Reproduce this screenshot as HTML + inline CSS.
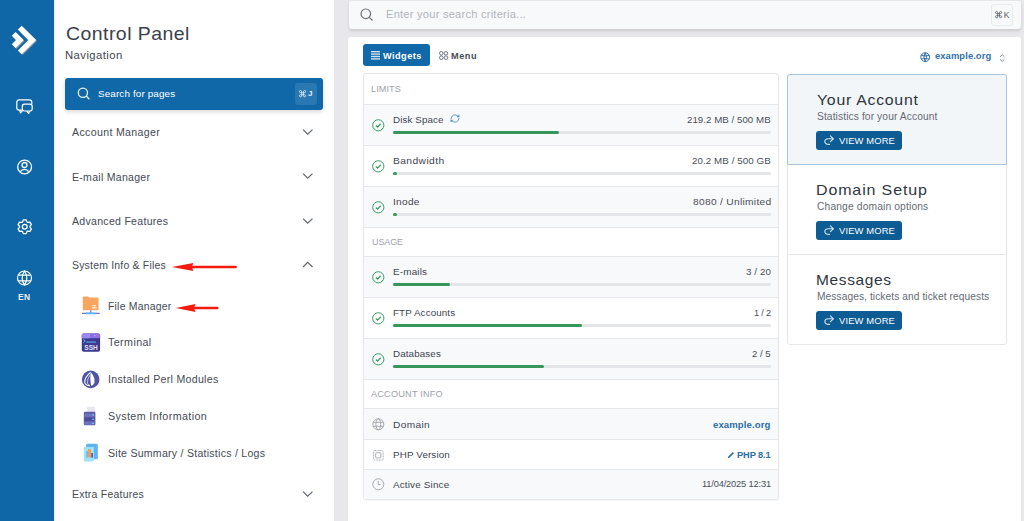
<!DOCTYPE html>
<html><head><meta charset="utf-8">
<style>
*{margin:0;padding:0;box-sizing:border-box}
html,body{width:1024px;height:521px;overflow:hidden;background:#e8e8ec;font-family:"Liberation Sans",sans-serif;color:#3b4250}
.a{position:absolute}
.t{position:absolute;white-space:nowrap;line-height:1}
svg{position:absolute;overflow:visible}
.nv{font-size:10px;color:#444a55;left:72px}
.sub{font-size:10px;color:#444a55;left:107px}
.row{position:absolute;left:364px;width:414px;border-top:1px solid #e7e8eb}
.g{background:#f8f9fb}
.lbl{font-size:10px;color:#3f4551}
.val{font-size:10px;color:#4a4f59;text-align:right}
.hdr{font-size:9px;color:#9ea2a9;left:371px}
.bar{position:absolute;left:393px;width:378px;height:3.5px;background:#e4e5e8;border-radius:2px}
.bar i{position:absolute;left:0;top:0;height:3.5px;background:#35985a;border-radius:2px}
.btn{position:absolute;left:816px;width:86px;height:19px;background:#0d5c94;border-radius:3px}
.btnt{font-size:9.5px;color:#fff;left:839px}
.h2{font-size:15px;letter-spacing:1.2px;color:#2f3540;left:817px}
.p{font-size:9.5px;letter-spacing:.42px;color:#666b74;left:817px}
</style></head><body>
<div class="a" style="left:0;top:0;width:54px;height:521px;background:#0f67a8"></div>
<div class="a" style="left:54px;top:0;width:280px;height:521px;background:#fff;border-left:1px solid #e6edf3"></div>

<!-- logo -->
<svg style="left:0;top:0" width="54" height="60">
  <polygon points="17.9,29.6 21.7,25.8 36.1,40 21.7,54.2 17.9,50.4 28.3,40" fill="#9b9aa0" transform="translate(.8,.9)"/>
  <polygon points="11.8,35.8 15.6,32 23.6,40 15.6,48 11.8,44.2 16,40" fill="#9b9aa0" transform="translate(.8,.9)"/>
  <polygon points="17.9,29.6 21.7,25.8 36.1,40 21.7,54.2 17.9,50.4 28.3,40" fill="#fff"/>
  <polygon points="11.8,35.8 15.6,32 23.6,40 15.6,48 11.8,44.2 16,40" fill="#fff"/>
</svg>
<!-- chat -->
<svg style="left:16px;top:99px" width="17" height="16" fill="none" stroke="#fff" stroke-width="1.2" stroke-linejoin="round">
  <path d="M6.5,11.2 H3.2 Q0.8,11.2 0.8,8.8 V3.2 Q0.8,0.8 3.2,0.8 H13.4 Q15.8,0.8 15.8,3.2 V5"/>
  <path d="M3.6,11.2 L4.6,14 L6.8,11.2"/>
  <path d="M8.5,5.2 H14 Q16.2,5.2 16.2,7.4 V9.8 Q16.2,12 14,12 H8.5 Q6.3,12 6.3,9.8 V7.4 Q6.3,5.2 8.5,5.2 Z" fill="#0f67a8"/>
  <path d="M10.8,12 L12.6,14.4 L13.6,12"/>
</svg>
<!-- user -->
<svg style="left:17px;top:160px" width="16" height="16" fill="none" stroke="#fff" stroke-width="1.3">
  <circle cx="7.6" cy="7.0" r="6.9"/>
  <circle cx="7.5" cy="5.0" r="2.5"/>
  <path d="M3.4,11.7 Q4.8,9.3 7.5,9.3 Q10.2,9.3 11.7,11.7"/>
</svg>
<!-- gear -->
<svg style="left:16px;top:217.8px" width="18" height="18" fill="none" stroke="#fff" stroke-width="1.3" stroke-linejoin="round">
  <path d="M6.59,3.91 L7.29,1.90 L10.21,1.90 L10.91,3.91 L11.87,4.46 L13.95,4.07 L15.41,6.59 L14.02,8.20 L14.02,9.30 L15.41,10.91 L13.95,13.43 L11.87,13.04 L10.91,13.59 L10.21,15.60 L7.29,15.60 L6.59,13.59 L5.63,13.04 L3.55,13.43 L2.09,10.91 L3.48,9.30 L3.48,8.20 L2.09,6.59 L3.55,4.07 L5.63,4.46 Z"/>
  <circle cx="8.75" cy="8.75" r="2.4"/>
</svg>
<!-- globe -->
<svg style="left:17px;top:270px" width="16" height="16" fill="none" stroke="#fff" stroke-width="1.2">
  <circle cx="7.5" cy="8" r="7"/>
  <path d="M7.5,1 Q2.8,8 7.5,15 Q12.2,8 7.5,1 Z"/>
  <path d="M1.3,5.2 H13.7 M1.3,10.8 H13.7"/>
</svg>
<div class="t" style="left:18px;top:293px;font-size:8.5px;letter-spacing:.3px;font-weight:bold;color:#e6eef5">EN</div>

<!-- nav content -->


<div class="a" style="left:65px;top:78px;width:258px;height:32px;background:#1068a8;border-radius:3px;box-shadow:0 2px 4px rgba(0,0,0,.15)"></div>
<svg style="left:77px;top:87px" width="14" height="14" fill="none" stroke="#eef4f9" stroke-width="1.3">
  <circle cx="5.9" cy="5.7" r="4.6"/><path d="M9.2,9 L12.4,12.3"/>
</svg>

<div class="a" style="left:295px;top:83px;width:22px;height:22px;background:#2a78b2;border-radius:3px"></div>
<svg style="left:298.6px;top:90.2px" width="9" height="9" fill="none" stroke="#dfe9f2" stroke-width="1.05"><path transform="scale(.82)" d="M3.2,3.2 V1.9 A1.3,1.3 0 1 0 1.9,3.2 H6.8 A1.3,1.3 0 1 0 5.5,1.9 V7 A1.3,1.3 0 1 0 6.8,5.7 H1.9 A1.3,1.3 0 1 0 3.2,7 Z"/></svg><div class="t" style="left:308px;top:89.8px;font-size:8px;font-weight:bold;color:#e9f0f6">J</div>

<!-- chevrons -->
<svg style="left:303px;top:129px" width="11" height="7" fill="none" stroke="#63686f" stroke-width="1.3"><path d="M0.1,0.6 L4.7,5.2 L9.5,0.6"/></svg>
<svg style="left:303px;top:173px" width="11" height="7" fill="none" stroke="#63686f" stroke-width="1.3"><path d="M0.1,0.6 L4.7,5.2 L9.5,0.6"/></svg>
<svg style="left:303px;top:218px" width="11" height="7" fill="none" stroke="#63686f" stroke-width="1.3"><path d="M0.1,0.6 L4.7,5.2 L9.5,0.6"/></svg>
<svg style="left:303.4px;top:261px" width="11" height="7" fill="none" stroke="#63686f" stroke-width="1.3"><path d="M0.1,6 L4.7,1.4 L9.5,6"/></svg>
<svg style="left:303px;top:491px" width="11" height="7" fill="none" stroke="#63686f" stroke-width="1.3"><path d="M0.1,0.6 L4.7,5.2 L9.5,0.6"/></svg>

<!-- red arrows -->
<svg style="left:170px;top:260.5px" width="70" height="12"><path d="M14,6 H65.6" stroke="#f41c10" stroke-width="2.6" stroke-linecap="round"/><polygon points="1.8,6 23.4,1.9 21.8,6 23.4,10.1" fill="#f41c10"/></svg>
<svg style="left:174px;top:302.2px" width="50" height="12"><path d="M12,6 H43.3" stroke="#f41c10" stroke-width="2.6" stroke-linecap="round"/><polygon points="1.8,6 21.6,2 20,6 21.6,10" fill="#f41c10"/></svg>
<!-- sub icons -->
<svg style="left:81px;top:296px" width="20" height="20">
  <path d="M1.8,0.5 H6.9 L8.1,1.6 H16.8 Q17.5,1.6 17.5,2.3 V14.3 H1.8 Z" fill="#f6a65e"/>
  <rect x="11.4" y="9" width="3.8" height="1.3" rx=".5" fill="#fde6cc"/><rect x="11" y="11" width="4.6" height="1.4" rx=".5" fill="#fde6cc"/>
  <rect x="9.2" y="14.3" width="1.1" height="2.4" fill="#5a5cc0"/>
  <rect x="0.9" y="16.8" width="17.8" height="1.1" fill="#5d5fc4"/>
  <rect x="4.8" y="16.4" width="9.9" height="1.9" rx=".6" fill="#56b8f2"/>
</svg>
<svg style="left:81px;top:333px" width="20" height="20">
  <rect x="0.8" y="0.6" width="18.3" height="18.2" rx="2" fill="#3c3a8e"/>
  <rect x="0.8" y="0.6" width="18.3" height="4.6" rx="1.8" fill="#8a6ee8"/>
  <rect x="0.8" y="0.6" width="8.4" height="4.6" rx="1.5" fill="#9c88f2"/>
  <circle cx="13.8" cy="2.7" r=".6" fill="#d8d0f5"/><circle cx="15.8" cy="2.7" r=".6" fill="#f07a5a"/>
  <path d="M2.3,6.5 L4.3,8 L2.3,9.8" stroke="#5fc8f5" stroke-width=".9" fill="none"/>
  <rect x="5.3" y="8.6" width="9.6" height=".9" fill="#5fc8f5"/>
  <text x="10" y="16.8" font-size="6.5" font-weight="bold" fill="#e4e4f8" text-anchor="middle" font-family="Liberation Sans">SSH</text>
</svg>
<svg style="left:78px;top:368px" width="24" height="24">
  <circle cx="12.7" cy="11.4" r="8.8" fill="#4f53a3"/>
  <path d="M12.6,4 Q17.6,9.6 16.3,15 Q15.3,17.8 13,17.7 Q11.8,11.5 12.6,4 Z" fill="#fff"/>
  <path d="M12.4,4.3 Q6,10 6.8,14.6 Q7.8,17.6 12,17.8" fill="none" stroke="#fff" stroke-width="1.1"/>
  <path d="M12.4,6.5 Q8.8,11 9.5,15.3 Q10.2,17 11.8,17.3" fill="none" stroke="#dfe3ff" stroke-width=".8"/>
</svg>
<svg style="left:78px;top:404px" width="24" height="24">
  <rect x="9.2" y="2.8" width="7.8" height="6.5" fill="#e6e8ef"/>
  <rect x="5.8" y="7.8" width="11.6" height="13.4" rx="1.2" fill="#5b5da9"/>
  <rect x="6.3" y="9.5" width="10.2" height="3.2" fill="#6f72bd"/>
  <rect x="6.3" y="13.8" width="10.2" height="3" fill="#4a4c9a"/>
  <rect x="6.3" y="17.8" width="10.2" height="3" fill="#6f72bd"/>
  <rect x="14.2" y="10.5" width="1.7" height="1.2" fill="#6fd0f0"/>
  <rect x="14.2" y="14.7" width="1.7" height="1.2" fill="#6fd0f0"/>
  <rect x="14.2" y="18.8" width="1.7" height="1.2" fill="#6fd0f0"/>
</svg>
<svg style="left:78px;top:441px" width="24" height="24">
  <rect x="8" y="2.8" width="11.8" height="15.4" rx="1.5" fill="#5fb3f2"/>
  <rect x="5.8" y="6" width="10.1" height="14.5" rx=".8" fill="#9fe3fa"/>
  <rect x="8.2" y="10" width="1.8" height="6.6" fill="#72b8ee"/>
  <rect x="13.1" y="12" width="1.9" height="4.6" fill="#5361b5"/>
  <rect x="9.9" y="8.1" width="3.2" height="8.5" rx="1" fill="#f2a04f"/>
</svg>

<!-- main -->
<div class="a" style="left:349px;top:1px;width:672px;height:27.5px;background:#f8f9fb;border-radius:3px;box-shadow:0 2px 3px rgba(0,0,0,.12)"></div>
<svg style="left:360px;top:8px" width="14" height="14" fill="none" stroke="#6d737c" stroke-width="1.2">
  <circle cx="5.8" cy="5.8" r="4.8"/><path d="M9.3,9.3 L12.5,12.5"/>
</svg>

<div class="a" style="left:990.5px;top:3.5px;width:22.5px;height:22px;border:1px solid #e8eaed;border-radius:3px;background:#f8f9fb"></div>
<svg style="left:994.6px;top:11px" width="9" height="9" fill="none" stroke="#60666f" stroke-width="1.05"><path transform="scale(.82)" d="M3.2,3.2 V1.9 A1.3,1.3 0 1 0 1.9,3.2 H6.8 A1.3,1.3 0 1 0 5.5,1.9 V7 A1.3,1.3 0 1 0 6.8,5.7 H1.9 A1.3,1.3 0 1 0 3.2,7 Z"/></svg><div class="t" style="left:1003.8px;top:10.8px;font-size:8.5px;color:#555b64">K</div>

<div class="a" style="left:348px;top:37px;width:673px;height:494px;background:#fff;border-radius:3px"></div>
<div class="a" style="left:363px;top:44px;width:67px;height:21.5px;background:#1169a9;border-radius:3px"></div>
<svg style="left:371px;top:51px" width="10" height="9"><g fill="#cfe0ee"><rect x="0" y="0" width="9" height="1.4"/><rect x="0" y="2.4" width="9" height="1.4"/><rect x="0" y="4.8" width="9" height="1.4"/><rect x="0" y="7.2" width="9" height="1.4"/></g></svg>
<div class="t" style="left:383px;top:51.5px;font-size:9.2px;letter-spacing:.45px;font-weight:bold;color:#fff">Widgets</div>
<svg style="left:438.5px;top:50.5px" width="11" height="10" fill="none" stroke="#5f6570" stroke-width=".9"><circle cx="2.3" cy="2.3" r="1.8"/><circle cx="6.9" cy="2.3" r="1.8"/><circle cx="2.3" cy="6.7" r="1.8"/><circle cx="6.9" cy="6.7" r="1.8"/></svg>
<div class="t" style="left:451px;top:51.5px;font-size:9.2px;letter-spacing:.5px;font-weight:bold;color:#474c56">Menu</div>

<svg style="left:920px;top:52px" width="11" height="11" fill="none" stroke="#3072ab" stroke-width="1"><circle cx="5.2" cy="5.2" r="4.4"/><path d="M5.2,0.8 Q2.4,5.2 5.2,9.6 Q8,5.2 5.2,0.8 Z"/><path d="M1.2,3.4 Q5.2,4.6 9.2,3.4 M1.2,7 Q5.2,5.8 9.2,7"/></svg>

<svg style="left:998.5px;top:53.5px" width="7" height="9" fill="none" stroke="#7d8fa0" stroke-width="1"><path d="M1,2.8 L3.2,0.8 L5.4,2.8 M1,5.4 L3.2,7.4 L5.4,5.4"/></svg>

<!-- widgets card -->
<div class="a" style="left:363px;top:73px;width:416px;height:427px;border:1px solid #e4e6e9;border-radius:3px;box-shadow:0 1px 2px rgba(0,0,0,.04)"></div>

<div class="row g" style="top:104px;height:41px"></div>
<div class="row" style="top:145px;height:41px"></div>
<div class="row g" style="top:186px;height:41px"></div>
<div class="row" style="top:227px;height:29px"></div>

<div class="row g" style="top:256px;height:41px"></div>
<div class="row" style="top:297px;height:41px"></div>
<div class="row g" style="top:338px;height:41px"></div>
<div class="row" style="top:379px;height:29px"></div>

<div class="row g" style="top:408px;height:31px"></div>
<div class="row" style="top:439px;height:30px"></div>
<div class="row g" style="top:469px;height:30px"></div>
<div id="limits"></div>
<svg style="left:372px;top:119px" width="13" height="13" fill="none" stroke="#3a9b62" stroke-width="1"><circle cx="6.3" cy="6.3" r="5.6"/><path d="M3.9,6.5 L5.6,8.1 L8.7,4.7" stroke-width="1.3"/></svg>
<div class="bar" style="top:130.5px"><i style="width:166px"></i></div>
<svg style="left:372px;top:160px" width="13" height="13" fill="none" stroke="#3a9b62" stroke-width="1"><circle cx="6.3" cy="6.3" r="5.6"/><path d="M3.9,6.5 L5.6,8.1 L8.7,4.7" stroke-width="1.3"/></svg>
<div class="bar" style="top:171.5px"><i style="width:4px"></i></div>
<svg style="left:372px;top:201px" width="13" height="13" fill="none" stroke="#3a9b62" stroke-width="1"><circle cx="6.3" cy="6.3" r="5.6"/><path d="M3.9,6.5 L5.6,8.1 L8.7,4.7" stroke-width="1.3"/></svg>
<div class="bar" style="top:212.5px"><i style="width:4px"></i></div>
<svg style="left:372px;top:271px" width="13" height="13" fill="none" stroke="#3a9b62" stroke-width="1"><circle cx="6.3" cy="6.3" r="5.6"/><path d="M3.9,6.5 L5.6,8.1 L8.7,4.7" stroke-width="1.3"/></svg>
<div class="bar" style="top:282.5px"><i style="width:57px"></i></div>
<svg style="left:372px;top:312px" width="13" height="13" fill="none" stroke="#3a9b62" stroke-width="1"><circle cx="6.3" cy="6.3" r="5.6"/><path d="M3.9,6.5 L5.6,8.1 L8.7,4.7" stroke-width="1.3"/></svg>
<div class="bar" style="top:323.5px"><i style="width:189px"></i></div>
<svg style="left:372px;top:353px" width="13" height="13" fill="none" stroke="#3a9b62" stroke-width="1"><circle cx="6.3" cy="6.3" r="5.6"/><path d="M3.9,6.5 L5.6,8.1 L8.7,4.7" stroke-width="1.3"/></svg>
<div class="bar" style="top:364.5px"><i style="width:151px"></i></div>
<svg style="left:449.8px;top:114.2px" width="11" height="10"><path d="M1.1,5 A3.9,3.9 0 0 1 7.9,2.2 M8.9,4.1 A3.9,3.9 0 0 1 2.1,6.9" fill="none" stroke="#5a9ad6" stroke-width="1"/><path d="M9.3,0.6 L9.4,3.6 L6.5,3.1 Z M0.6,8.6 L0.5,5.4 L3.4,6.1 Z" fill="#4a8fd0"/></svg>
<svg style="left:372px;top:418px" width="13" height="13" fill="none" stroke="#9ea3aa" stroke-width=".9"><circle cx="6.3" cy="6.3" r="5.5"/><ellipse cx="6.3" cy="6.3" rx="2.4" ry="5.5"/><path d="M1,4.3 H11.6 M1,8.3 H11.6"/></svg>
<svg style="left:372px;top:448.5px" width="13" height="13" fill="none" stroke="#9ea3aa" stroke-width=".9"><rect x="1.5" y="1.5" width="9.6" height="9.6" rx="1.5" stroke-dasharray="1 .6"/><rect x="3.7" y="3.7" width="5.2" height="5.2" rx=".8"/></svg>
<svg style="left:372px;top:478px" width="13" height="13" fill="none" stroke="#9ea3aa" stroke-width=".9"><circle cx="6.3" cy="6.3" r="5.5"/><path d="M6.3,3 V6.6 H8.8"/></svg>
<svg style="left:727px;top:451px" width="8" height="8"><path d="M0.8,7.2 L1.3,5.6 L5.8,1.1 L6.9,2.2 L2.4,6.7 Z" fill="#2a6ea8"/></svg>
<div class="a" style="left:787px;top:74px;width:220px;height:271px;border:1px solid #e4e6e9;border-radius:3px;background:#fff"></div>
<div class="a" style="left:787px;top:74px;width:220px;height:91px;border:1px solid #a9c5de;border-radius:3px 3px 0 0;background:#f3f6f9"></div>
<div class="a" style="left:788px;top:254px;width:218px;height:1px;background:#e4e6e9"></div>
<div class="btn" style="top:130.5px"></div>
<svg style="left:824px;top:135px" width="12" height="11" fill="none" stroke="#d9e6f0" stroke-width="1.1" stroke-linecap="round" stroke-linejoin="round"><path d="M5.5,9.4 Q0.8,9.6 0.8,6.6 Q1,3.8 4.5,3.8 H9.4 M6.4,0.9 L9.4,3.8 L6.4,6.7"/></svg>
<div class="btn" style="top:220.5px"></div>
<svg style="left:824px;top:225px" width="12" height="11" fill="none" stroke="#d9e6f0" stroke-width="1.1" stroke-linecap="round" stroke-linejoin="round"><path d="M5.5,9.4 Q0.8,9.6 0.8,6.6 Q1,3.8 4.5,3.8 H9.4 M6.4,0.9 L9.4,3.8 L6.4,6.7"/></svg>
<div class="btn" style="top:310.5px"></div>
<svg style="left:824px;top:315px" width="12" height="11" fill="none" stroke="#d9e6f0" stroke-width="1.1" stroke-linecap="round" stroke-linejoin="round"><path d="M5.5,9.4 Q0.8,9.6 0.8,6.6 Q1,3.8 4.5,3.8 H9.4 M6.4,0.9 L9.4,3.8 L6.4,6.7"/></svg>
<div class="t" style="left:393.30px;top:114.87px;font-size:9.6px;letter-spacing:0.104px;color:#3f4551;transform:scaleX(1.0199);transform-origin:0 0">Disk Space</div>
<div class="t" style="left:687.30px;top:114.87px;font-size:9.6px;letter-spacing:0.046px;color:#4a4f59;transform:scaleX(1.0090);transform-origin:0 0">219.2 MB / 500 MB</div>
<div class="t" style="left:393.30px;top:155.87px;font-size:9.6px;letter-spacing:0.370px;color:#3f4551;transform:scaleX(1.0712);transform-origin:0 0">Bandwidth</div>
<div class="t" style="left:692.10px;top:155.87px;font-size:9.6px;letter-spacing:0.083px;color:#4a4f59;transform:scaleX(1.0167);transform-origin:0 0">20.2 MB / 500 GB</div>
<div class="t" style="left:393.30px;top:196.87px;font-size:9.6px;letter-spacing:0.289px;color:#3f4551;transform:scaleX(1.0513);transform-origin:0 0">Inode</div>
<div class="t" style="left:692.70px;top:196.87px;font-size:9.6px;letter-spacing:0.276px;color:#4a4f59;transform:scaleX(1.0639);transform-origin:0 0">8080 / Unlimited</div>
<div class="t" style="left:393.30px;top:266.87px;font-size:9.6px;letter-spacing:0.163px;color:#3f4551;transform:scaleX(1.0313);transform-origin:0 0">E-mails</div>
<div class="t" style="left:746.00px;top:266.87px;font-size:9.6px;letter-spacing:0.082px;color:#4a4f59;transform:scaleX(1.0176);transform-origin:0 0">3 / 20</div>
<div class="t" style="left:393.30px;top:307.87px;font-size:9.6px;letter-spacing:0.114px;color:#3f4551;transform:scaleX(1.0211);transform-origin:0 0">FTP Accounts</div>
<div class="t" style="left:753.70px;top:307.87px;font-size:9.6px;letter-spacing:-0.200px;color:#4a4f59;transform:scaleX(0.9582);transform-origin:0 0">1 / 2</div>
<div class="t" style="left:393.30px;top:348.87px;font-size:9.6px;letter-spacing:0.118px;color:#3f4551;transform:scaleX(1.0210);transform-origin:0 0">Databases</div>
<div class="t" style="left:752.20px;top:348.87px;font-size:9.6px;letter-spacing:-0.004px;color:#4a4f59;transform:scaleX(0.9991);transform-origin:0 0">2 / 5</div>
<div class="t" style="left:393.40px;top:419.57px;font-size:9.6px;letter-spacing:0.348px;color:#3f4551;transform:scaleX(1.0562);transform-origin:0 0">Domain</div>
<div class="t" style="left:393.40px;top:450.07px;font-size:9.6px;letter-spacing:0.124px;color:#3f4551;transform:scaleX(1.0235);transform-origin:0 0">PHP Version</div>
<div class="t" style="left:393.40px;top:479.57px;font-size:9.6px;letter-spacing:0.147px;color:#3f4551;transform:scaleX(1.0319);transform-origin:0 0">Active Since</div>
<div class="t" style="left:371.40px;top:85.38px;font-size:9px;letter-spacing:0.079px;color:#9ea2a9;transform:scaleX(1.0138);transform-origin:0 0">LIMITS</div>
<div class="t" style="left:371.50px;top:238.38px;font-size:9px;letter-spacing:-0.064px;color:#9ea2a9;transform:scaleX(0.9920);transform-origin:0 0">USAGE</div>
<div class="t" style="left:371.00px;top:390.38px;font-size:9px;letter-spacing:0.151px;color:#9ea2a9;transform:scaleX(1.0248);transform-origin:0 0">ACCOUNT INFO</div>
<div class="t" style="left:712.80px;top:419.64px;font-size:9.4px;letter-spacing:0.103px;color:#2a6ea8;transform:scaleX(1.0189);transform-origin:0 0;font-weight:bold">example.org</div>
<div class="t" style="left:736.80px;top:449.84px;font-size:9.4px;letter-spacing:-0.093px;color:#2a6ea8;transform:scaleX(0.9842);transform-origin:0 0;font-weight:bold">PHP 8.1</div>
<div class="t" style="left:701.70px;top:478.97px;font-size:9.6px;letter-spacing:-0.170px;color:#4a4f59;transform:scaleX(0.9665);transform-origin:0 0">11/04/2025 12:31</div>
<div class="t" style="left:816.80px;top:92.82px;font-size:14.5px;letter-spacing:0.666px;color:#2f3540;transform:scaleX(1.0934);transform-origin:0 0">Your Account</div>
<div class="t" style="left:816.80px;top:111.83px;font-size:10px;letter-spacing:0.101px;color:#666b74;transform:scaleX(1.0232);transform-origin:0 0">Statistics for your Account</div>
<div class="t" style="left:839.00px;top:136.51px;font-size:9.2px;letter-spacing:0.137px;color:#fff;transform:scaleX(1.0209);transform-origin:0 0">VIEW MORE</div>
<div class="t" style="left:815.70px;top:183.42px;font-size:14.5px;letter-spacing:0.777px;color:#2f3540;transform:scaleX(1.1039);transform-origin:0 0">Domain Setup</div>
<div class="t" style="left:816.80px;top:201.73px;font-size:10px;letter-spacing:0.136px;color:#666b74;transform:scaleX(1.0264);transform-origin:0 0">Change domain options</div>
<div class="t" style="left:839.00px;top:226.51px;font-size:9.2px;letter-spacing:0.137px;color:#fff;transform:scaleX(1.0209);transform-origin:0 0">VIEW MORE</div>
<div class="t" style="left:815.73px;top:273.12px;font-size:14.5px;letter-spacing:0.593px;color:#2f3540;transform:scaleX(1.0684);transform-origin:0 0">Messages</div>
<div class="t" style="left:816.80px;top:291.53px;font-size:10px;letter-spacing:0.082px;color:#666b74;transform:scaleX(1.0181);transform-origin:0 0">Messages, tickets and ticket requests</div>
<div class="t" style="left:839.00px;top:316.51px;font-size:9.2px;letter-spacing:0.137px;color:#fff;transform:scaleX(1.0209);transform-origin:0 0">VIEW MORE</div>
<div class="t" style="left:65.50px;top:24.84px;font-size:18.5px;letter-spacing:0.445px;color:#3a404b;transform:scaleX(1.0505);transform-origin:0 0">Control Panel</div>
<div class="t" style="left:386.40px;top:9.31px;font-size:10.5px;letter-spacing:0.233px;color:#b0b4bb;transform:scaleX(1.0550);transform-origin:0 0">Enter your search criteria...</div>
<div class="t" style="left:935.00px;top:52.33px;font-size:9.3px;letter-spacing:0.070px;color:#3072ab;transform:scaleX(1.0128);transform-origin:0 0;font-weight:bold">example.org</div>
<div class="t" style="left:72.30px;top:127.73px;font-size:10px;letter-spacing:0.319px;color:#444a55;transform:scaleX(1.0598);transform-origin:0 0">Account Manager</div>
<div class="t" style="left:72.30px;top:172.53px;font-size:10px;letter-spacing:0.272px;color:#444a55;transform:scaleX(1.0523);transform-origin:0 0">E-mail Manager</div>
<div class="t" style="left:72.30px;top:217.03px;font-size:10px;letter-spacing:0.275px;color:#444a55;transform:scaleX(1.0535);transform-origin:0 0">Advanced Features</div>
<div class="t" style="left:72.30px;top:260.73px;font-size:10px;letter-spacing:0.201px;color:#444a55;transform:scaleX(1.0439);transform-origin:0 0">System Info &amp; Files</div>
<div class="t" style="left:72.30px;top:490.33px;font-size:10px;letter-spacing:0.225px;color:#444a55;transform:scaleX(1.0467);transform-origin:0 0">Extra Features</div>
<div class="t" style="left:107.80px;top:301.63px;font-size:10px;letter-spacing:0.213px;color:#444a55;transform:scaleX(1.0413);transform-origin:0 0">File Manager</div>
<div class="t" style="left:107.50px;top:338.13px;font-size:10px;letter-spacing:0.362px;color:#444a55;transform:scaleX(1.0723);transform-origin:0 0">Terminal</div>
<div class="t" style="left:107.50px;top:375.03px;font-size:10px;letter-spacing:0.265px;color:#444a55;transform:scaleX(1.0601);transform-origin:0 0">Installed Perl Modules</div>
<div class="t" style="left:107.50px;top:412.03px;font-size:10px;letter-spacing:0.343px;color:#444a55;transform:scaleX(1.0731);transform-origin:0 0">System Information</div>
<div class="t" style="left:107.50px;top:448.83px;font-size:10px;letter-spacing:0.241px;color:#444a55;transform:scaleX(1.0558);transform-origin:0 0">Site Summary / Statistics / Logs</div>
<div class="t" style="left:65.40px;top:49.61px;font-size:10.5px;letter-spacing:0.394px;color:#3f4551;transform:scaleX(1.0766);transform-origin:0 0">Navigation</div>
<div class="t" style="left:97.70px;top:88.87px;font-size:9.6px;letter-spacing:0.131px;color:#fff;transform:scaleX(1.0275);transform-origin:0 0">Search for pages</div>
</body></html>
